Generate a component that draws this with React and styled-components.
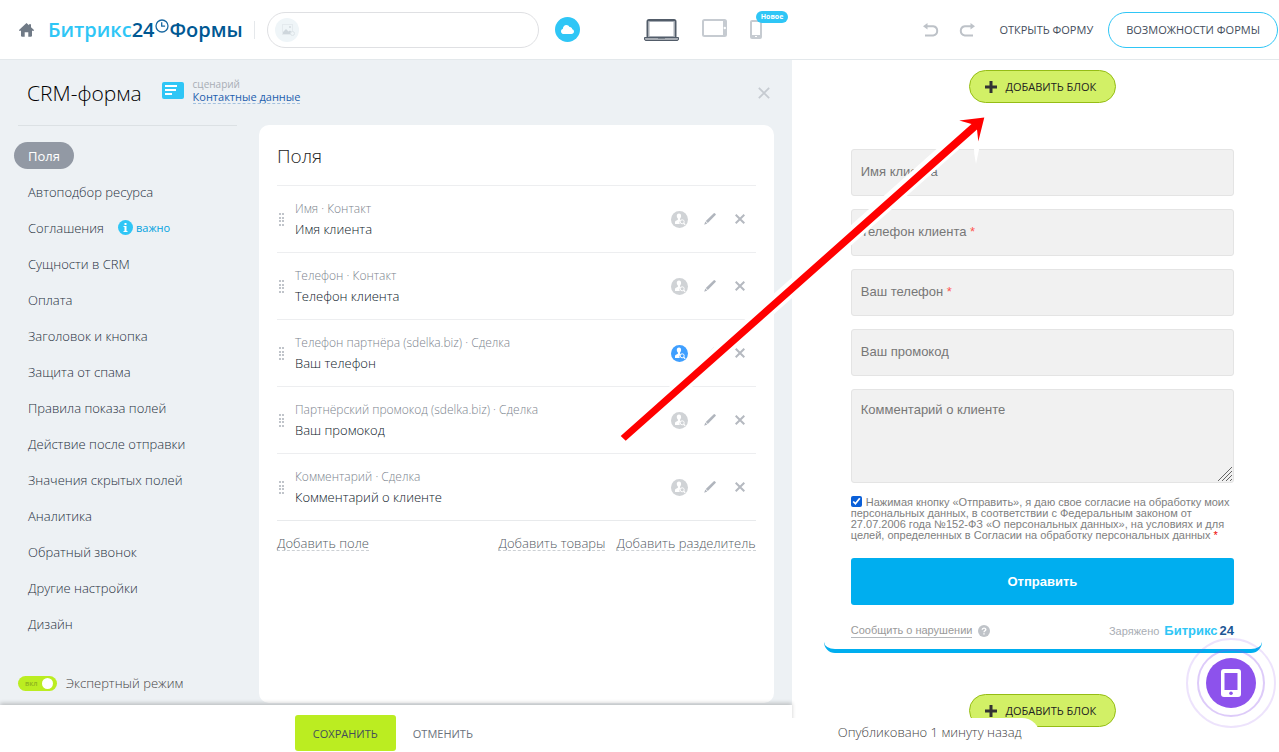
/* React */
import React, { useState } from 'react';

/* Styles */
import styled, { createGlobalStyle } from 'styled-components';

/* Data */
const menuItems = [
    { title: 'Поля' },
    { title: 'Автоподбор ресурса' },
    { title: 'Соглашения', important: true },
    { title: 'Сущности в CRM' },
    { title: 'Оплата' },
    { title: 'Заголовок и кнопка' },
    { title: 'Защита от спама' },
    { title: 'Правила показа полей' },
    { title: 'Действие после отправки' },
    { title: 'Значения скрытых полей' },
    { title: 'Аналитика' },
    { title: 'Обратный звонок' },
    { title: 'Другие настройки' },
    { title: 'Дизайн' },
];

const fields = [
    { source: 'Имя · Контакт', title: 'Имя клиента' },
    { source: 'Телефон · Контакт', title: 'Телефон клиента' },
    { source: 'Телефон партнёра (sdelka.biz) · Сделка', title: 'Ваш телефон', active: true },
    { source: 'Партнёрский промокод (sdelka.biz) · Сделка', title: 'Ваш промокод' },
    { source: 'Комментарий · Сделка', title: 'Комментарий о клиенте' },
];

const inputs = [
    { id: 'name', title: 'Имя клиента' },
    { id: 'client-phone', title: 'Телефон клиента', required: true },
    { id: 'phone', title: 'Ваш телефон', required: true },
    { id: 'promo', title: 'Ваш промокод' },
];

/* Styled Components */
const GlobalStyle = createGlobalStyle`
    *, *::before, *::after {
        box-sizing: border-box;
    }

    body {
        margin: 0;
        background: #fff;
        color: #525c69;
        font-family: "Open Sans", sans-serif;
        font-size: 13px;
    }

    button, input, textarea {
        font-family: inherit;
    }

    svg {
        display: block;
    }
`;

const Page = styled.div`
    position: relative;
    min-height: 100vh;
    display: flex;
    flex-direction: column;
`;

const Header = styled.header`
    height: 60px;
    display: flex;
    align-items: center;
    padding-left: 19px;
    border-bottom: 1px solid #e3e8eb;
`;

const IconButton = styled.button`
    display: flex;
    align-items: center;
    justify-content: center;
    padding: 0;
    border: 0;
    background: none;
    cursor: pointer;
`;

const Logo = styled.a`
    display: flex;
    align-items: center;
    margin-left: 14px;
    color: #005893;
    font-size: 20px;
    font-weight: 600;
    line-height: 28px;
    text-decoration: none;
    white-space: nowrap;

    svg {
        align-self: flex-start;
        margin: 3px 1px 0 0;
    }
`;

const LogoAccent = styled.span`
    color: #2fc6f6;
`;

const Separator = styled.span`
    width: 1px;
    height: 18px;
    margin: 0 12px 0 11px;
    background: #e5e8eb;
`;

const TitleBox = styled.div`
    flex: 0 1 272px;
    height: 36px;
    display: flex;
    align-items: center;
    gap: 8px;
    padding: 0 7px;
    border: 1px solid #dfe0e3;
    border-radius: 18px;
`;

const TitleInput = styled.input`
    flex: 1;
    min-width: 0;
    border: 0;
    outline: 0;
    background: none;
`;

const CloudButton = styled(IconButton)`
    width: 25px;
    height: 25px;
    flex: none;
    margin-left: 16px;
    border-radius: 50%;
    background: #2fc6f6;
`;

const Devices = styled.div`
    display: flex;
    align-items: flex-start;
    gap: 23px;
    margin-left: 64px;
`;

const PhoneButton = styled(IconButton)`
    position: relative;
`;

const NewBadge = styled.span`
    position: absolute;
    left: 6px;
    top: -8px;
    height: 12px;
    padding: 0 5px;
    border-radius: 6px;
    background: #2fc6f6;
    color: #fff;
    font-size: 7px;
    font-weight: 700;
    line-height: 12px;
`;

const HeaderActions = styled.div`
    display: flex;
    align-items: center;
    margin-left: auto;
    padding-right: 1px;
`;

const History = styled.div`
    display: flex;
    gap: 20px;
    margin-right: 24px;
`;

const OpenLink = styled.a`
    margin-right: 15px;
    color: #434d5b;
    font-size: 11px;
    font-weight: 500;
    text-decoration: none;
    white-space: nowrap;
`;

const OutlineButton = styled.button`
    height: 36px;
    padding: 0 17px;
    border: 1px solid #2fc6f6;
    border-radius: 18px;
    background: #fff;
    color: #434d5b;
    font-size: 11px;
    font-weight: 500;
    white-space: nowrap;
`;

const Workspace = styled.main`
    flex: 1;
    display: grid;
    grid-template-columns: minmax(0, 13fr) minmax(0, 8fr);
`;

const Editor = styled.section`
    display: flex;
    flex-direction: column;
    background: #edf1f4;
`;

const EditorHeader = styled.div`
    height: 65px;
    display: flex;
    align-items: center;
    padding: 0 22px 0 27px;
`;

const EditorTitle = styled.h1`
    margin: 0 20px 0 0;
    color: #000;
    font-size: 21px;
    font-weight: 300;
    line-height: 30px;
`;

const Scenario = styled.div`
    display: flex;
    flex-direction: column;
    margin: 0 auto 4px 9px;
    color: #a8adb4;
    font-size: 10px;
    line-height: 12px;
`;

const ScenarioLink = styled.a`
    border-bottom: 1px dashed #a3c1df;
    color: #1d5fae;
    font-size: 11px;
    line-height: 13px;
    text-decoration: none;
`;

const EditorBody = styled.div`
    flex: 1;
    display: flex;
    padding-right: 18px;
`;

const Sidebar = styled.aside`
    flex: 0 0 259px;
    padding: 0 22px 0 14px;
`;

const Menu = styled.nav`
    display: flex;
    flex-direction: column;
    align-items: flex-start;
    gap: 9px;
    margin-left: 4px;
    padding-top: 16px;
    border-top: 1px solid #dce1e4;
`;

const MenuRow = styled.div`
    display: flex;
    align-items: center;
    margin-left: -4px;
`;

const MenuItem = styled.a`
    height: 27px;
    padding: 0 14px;
    border-radius: 14px;
    background: ${props => props.$active ? '#9299a4' : 'none'};
    color: ${props => props.$active ? '#fff' : '#26303d'};
    font-size: 13px;
    font-weight: ${props => props.$active ? '400' : '300'};
    line-height: 28px;
    text-decoration: none;
    white-space: nowrap;
`;

const Important = styled.span`
    display: flex;
    align-items: center;
    gap: 3px;
    color: #00a2e0;
    font-size: 11px;
    line-height: 16px;
`;

const ExpertMode = styled.label`
    display: flex;
    align-items: center;
    gap: 9px;
    margin: 36px 0 0 4px;
    color: #444;
    font-size: 13px;
    font-weight: 300;
    line-height: 20px;
`;

const Switch = styled.span`
    position: relative;
    width: 39px;
    height: 15px;
    padding-left: 7px;
    border-radius: 8px;
    background: ${props => props.$on ? '#bbed21' : '#c6cdd3'};
    color: #8fb31f;
    font-size: 7px;
    font-weight: 600;
    line-height: 15px;

    &::after {
        content: '';
        position: absolute;
        top: 2px;
        left: ${props => props.$on ? '24px' : '4px'};
        width: 11px;
        height: 11px;
        border-radius: 50%;
        background: #fff;
    }
`;

const SwitchInput = styled.input`
    position: absolute;
    inset: 0;
    margin: 0;
    opacity: 0;
`;

const Card = styled.section`
    flex: 1;
    min-width: 0;
    margin-bottom: 2px;
    padding: 0 18px;
    border-radius: 10px;
    background: #fff;
`;

const CardTitle = styled.h2`
    margin: 0;
    padding: 17px 0 14px;
    color: #222;
    font-size: 19px;
    font-weight: 300;
    line-height: 29px;
`;

const FieldList = styled.ul`
    margin: 0;
    padding: 0;
    border-bottom: 1px solid #e8eaec;
    list-style: none;
`;

const FieldRow = styled.li`
    height: 67px;
    display: flex;
    align-items: center;
    padding: 0 6px 0 2px;
    border-top: 1px solid #edeef0;
`;

const FieldText = styled.div`
    flex: 1;
    padding-left: 11px;
`;

const FieldSource = styled.div`
    color: #7c848e;
    font-size: 12px;
    font-weight: 300;
    line-height: 20px;
`;

const FieldName = styled.div`
    color: #0c1828;
    font-size: 13px;
    font-weight: 300;
    line-height: 20px;
`;

const FieldActions = styled.div`
    display: flex;
    align-items: center;
    gap: 10px;

    button {
        width: 20px;
    }
`;

const CardLinks = styled.div`
    display: flex;
    gap: 11px;
    margin-top: 15px;
`;

const DashedLink = styled.a`
    margin-right: ${props => props.$push ? 'auto' : '0'};
    border-bottom: 1px dashed #ccd0d4;
    color: #535a63;
    font-size: 13px;
    font-weight: 300;
    line-height: 14px;
    text-decoration: none;
    white-space: nowrap;
`;

const EditorFooter = styled.footer`
    position: relative;
    height: 47px;
    display: flex;
    align-items: center;
    justify-content: center;
    padding-top: 9px;
    background: #fff;
    box-shadow: 0 -2px 4px rgba(0, 0, 0, 0.2);
`;

const FooterButton = styled.button`
    height: 36px;
    padding: ${props => props.$primary ? '0 18px' : '0 24px 0 17px'};
    border: 0;
    border-radius: 3px;
    background: ${props => props.$primary ? '#bbed21' : 'none'};
    color: ${props => props.$primary ? '#434d5b' : '#6b727c'};
    font-size: 11px;
    font-weight: 500;
`;

const Preview = styled.section`
    position: relative;
    display: flex;
    flex-direction: column;
    align-items: center;
    padding: 10px 17px 25px 32px;
`;

const AddBlock = styled.button`
    height: 33px;
    flex: none;
    display: flex;
    align-items: center;
    gap: 8px;
    padding: 0 19px 0 15px;
    border: 1px solid #95bd15;
    border-radius: 17px;
    background: #d2f066;
    color: #222;
    font-size: 11px;
    font-weight: 500;
`;

const Form = styled.form`
    align-self: stretch;
    display: flex;
    flex-direction: column;
    gap: 13px;
    margin: 46px 0 41px;
    padding: 0 28px 8px 27px;
    border-bottom: 4px solid #00aeef;
    border-radius: 0 0 11px 11px;
    color: #777;
    font-family: "Liberation Sans", Arial, sans-serif;
`;

const FormField = styled.div`
    position: relative;
    display: flex;
`;

const FormLabel = styled.label`
    position: absolute;
    left: 10px;
    top: ${props => props.$top ? '13px' : '15px'};
    font-size: 13px;
    line-height: 16px;
`;

const Required = styled.span`
    color: ${props => props.$strong ? '#e00' : '#ff5752'};
`;

const FormInput = styled.input`
    width: 100%;
    height: 47px;
    padding: 0 10px;
    border: 1px solid #e4e4e4;
    border-radius: 3px;
    background: #f1f1f1;
    font-size: 13px;
`;

const FormTextarea = styled.textarea`
    width: 100%;
    height: 94px;
    padding: 12px 10px;
    border: 1px solid #e4e4e4;
    border-radius: 3px;
    background: #f1f1f1;
    font-size: 13px;
    resize: none;
`;

const Grip = styled.svg`
    position: absolute;
    right: 2px;
    bottom: 2px;
`;

const Consent = styled.label`
    color: #808080;
    font-size: 11px;
    line-height: 11px;
`;

const ConsentBox = styled.input`
    width: 11px;
    height: 11px;
    margin: 0 4px 0 0;
    vertical-align: -1px;
    accent-color: #0a5fd8;
`;

const SubmitButton = styled.button`
    height: 47px;
    margin-top: 4px;
    border: 0;
    border-radius: 3px;
    background: #00aeef;
    color: #fff;
    font-size: 13px;
    font-weight: 700;
`;

const FormFooter = styled.div`
    display: flex;
    align-items: center;
    margin-top: 3px;
    color: #a8adb4;
    font-size: 11px;
    line-height: 20px;
`;

const ReportLink = styled.a`
    margin-right: 6px;
    border-bottom: 1px solid #b5b8bc;
    color: #9a9a9a;
    font-size: 11px;
    line-height: 13px;
    text-decoration: none;
`;

const Powered = styled.span`
    margin-left: auto;
`;

const PoweredLogo = styled(Logo)`
    gap: 2px;
    margin-left: 5px;
    color: #1d5795;
    font-size: 13px;
    font-weight: 700;
    line-height: 20px;
`;

const Published = styled.div`
    position: absolute;
    left: 0;
    bottom: 0;
    height: 34px;
    padding: 0 18px 0 46px;
    border-top-right-radius: 18px;
    background: #fff;
    color: #444;
    font-size: 13px;
    font-weight: 300;
    line-height: 29px;
`;

const Widget = styled.button`
    position: absolute;
    right: 23px;
    bottom: 44px;
    width: 50px;
    height: 50px;
    display: flex;
    align-items: center;
    justify-content: center;
    padding: 0;
    border: 0;
    border-radius: 50%;
    background: #8d52ec;

    &::before,
    &::after {
        content: '';
        position: absolute;
        border-radius: 50%;
    }

    &::before {
        inset: -9px;
        border: 2px solid rgba(141, 82, 236, 0.3);
    }

    &::after {
        inset: -20px;
        border: 2px solid rgba(141, 82, 236, 0.16);
    }
`;

const Pointer = styled.svg`
    position: absolute;
    left: 600px;
    top: 100px;
    pointer-events: none;
`;

/* Icons */
const HomeIcon = () => (
    <svg width="15" height="14" viewBox="0 0 15 14" fill="#707a86">
        <path d="M7.5 0 10 2.3V1.2h2v3L15 7v.8h-2V13l-.8.8H9.3V9.3H5.7v4.5H2.8L2 13V7.8H0V7z" />
    </svg>
);

const ClockIcon = () => (
    <svg width="14" height="14" viewBox="0 0 14 14" fill="none" stroke="#1767a0" strokeWidth="1.3">
        <circle cx="7" cy="7" r="6" />
        <path d="M6.7 3.2v4h3.4" />
    </svg>
);

const PictureIcon = () => (
    <svg width="24" height="24" viewBox="0 0 24 24">
        <circle cx="12" cy="12" r="12" fill="#eff5f8" />
        <rect x="7.5" y="6.5" width="10" height="10" fill="none" stroke="#e4eaee" />
        <path d="M8 16v-2l3-3 2.500 2.500 1.500-1 2 2V16z" fill="#ced6dc" />
        <circle cx="15" cy="9" r="1" fill="#d3dadf" />
        <circle cx="17.500" cy="15.500" r="2" fill="#eff5f8" stroke="#dde4e8" />
    </svg>
);

const CloudIcon = () => (
    <svg width="13" height="9" viewBox="0 0 13 9" fill="#fff">
        <path d="M3 9C1.200 9 0 7.900 0 6.400 0 5.200.7 4.300 1.800 4 1.800 1.700 3.300 0 5.300 0c1.500 0 2.700.8 3.200 2 1.500-.2 2.600.8 2.700 2.200 1.100.2 1.800 1.100 1.800 2.300C13 8 11.900 9 10.400 9z" />
    </svg>
);

const LaptopIcon = () => (
    <svg width="35" height="22" viewBox="0 0 35 22">
        <rect x="3.500" y="1" width="28" height="18" rx="1.500" fill="#fff" stroke="#525c69" strokeWidth="2" />
        <rect x="5" y="2.500" width="25" height="15" fill="none" stroke="#a5abb3" />
        <path d="M.5 18.500h34v1.500q0 1.500-1.500 1.500H2Q.5 21.500.5 20z" fill="#a8adb4" stroke="#525c69" />
        <path d="M14 18h7v1.500h-7z" fill="#525c69" />
    </svg>
);

const TabletIcon = () => (
    <svg width="25" height="18" viewBox="0 0 25 18">
        <rect x="1" y="1" width="23" height="16" rx="1.500" fill="#fff" stroke="#c6cbd1" strokeWidth="2" />
        <path d="M21 1h3v16h-3z" fill="#c6cbd1" />
        <circle cx="22.800" cy="9" r="1.200" fill="#fff" />
    </svg>
);

const PhoneIcon = () => (
    <svg width="12" height="20" viewBox="0 0 12 20">
        <rect x="1" y="2" width="10" height="17" rx="1" fill="#fff" stroke="#c6cbd1" strokeWidth="2" />
        <path d="M1 16h10v3H1z" fill="#c6cbd1" />
        <path d="M5 17h2v1H5z" fill="#fff" />
    </svg>
);

const UndoIcon = ({ redo }) => (
    <svg width="16" height="14" viewBox="0 0 16 14">
        <g transform={redo ? 'translate(16 0) scale(-1 1)' : undefined}>
            <path d="M3 3.200h7.200a4.700 4.700 0 0 1 0 9.300H2" fill="none" stroke="#bdc2c8" strokeWidth="2" />
            <path d="M4.500 0v6.400L0 3.200z" fill="#bdc2c8" />
        </g>
    </svg>
);

const ScenarioIcon = () => (
    <svg width="22" height="21" viewBox="0 0 22 21">
        <rect width="22" height="17" rx="2" fill="#2fc6f6" />
        <path d="M3 4h12M3 8h11M3 12h7" stroke="#fff" strokeWidth="2" />
    </svg>
);

const InfoIcon = () => (
    <svg width="15" height="15" viewBox="0 0 15 15">
        <circle cx="7.500" cy="7.500" r="7.500" fill="#2fc6f6" />
        <path d="M6.500 3h2v2h-2zM5.500 6h3v5h1v1h-4v-1h1V7h-1z" fill="#fff" />
    </svg>
);

const CrossIcon = ({ size = 10, color = '#b5b9c0', width = 2 }) => (
    <svg width={size} height={size} viewBox="0 0 10 10" stroke={color} strokeWidth={width}>
        <path d="M.7.7l8.600 8.600M9.300.7.7 9.300" />
    </svg>
);

const PencilIcon = () => (
    <svg width="12" height="12" viewBox="0 0 12 12" fill="#b0b5bd">
        <path d="M9.800.3q.6-.5 1.200.1l.6.600q.5.600 0 1.100L3.800 9.900 1.800 7.900zM1.300 8.400l2 2L.2 11.800z" />
    </svg>
);

const PersonIcon = ({ active }) => (
    <svg width="17" height="17" viewBox="0 0 17 17">
        <circle cx="8.500" cy="8.500" r="8.500" fill={active ? '#3f9fff' : '#d0d3d6'} />
        <path d="M8 2.500c1.500 0 2.200.9 2.100 2.400 0 1.200-.5 2-1 2.500v1.300l.9.500a3 3 0 0 0-1.200 3.800H4V11c0-.7.5-1.100 1.500-1.500l1.400-.8V7.400c-.6-.5-1.100-1.300-1.100-2.500C5.700 3.400 6.500 2.500 8 2.500z" fill="#fff" />
        <circle cx="11.200" cy="10.800" r="2" fill="none" stroke="#fff" />
        <path d="M12.600 12.200l1.600 1.500" stroke="#fff" strokeWidth="1.200" />
    </svg>
);

const DragIcon = () => (
    <svg width="5" height="13" viewBox="0 0 5 13" fill="#c0c4ca">
        {[0, 4, 7, 11].map(y => (
            <path key={y} d={`M0 ${y}h2v2H0zM3 ${y}h2v2H3z`} />
        ))}
    </svg>
);

const PlusIcon = () => (
    <svg width="12" height="12" viewBox="0 0 12 12" fill="#333">
        <path d="M4.500 0h3v4.500H12v3H7.500V12h-3V7.500H0v-3h4.500z" />
    </svg>
);

const HelpIcon = () => (
    <svg width="12" height="12" viewBox="0 0 12 12">
        <circle cx="6" cy="6" r="6" fill="#bfc3c8" />
        <path d="M4.200 4.800c0-2.200 3.600-2.200 3.600-.2C7.800 5.800 6 5.800 6 7.300M6 8.200v1.400" fill="none" stroke="#fff" strokeWidth="1.400" />
    </svg>
);

const MobileIcon = () => (
    <svg width="20" height="28" viewBox="0 0 20 28">
        <rect width="20" height="28" rx="3" fill="#fff" />
        <path d="M3.500 4h13v17h-13z" fill="#8d52ec" />
        <circle cx="10" cy="24.300" r="1.800" fill="#8d52ec" />
    </svg>
);

const App = () => {
    // Hooks for the selected menu item and expert mode
    const [selected, setSelected] = useState('Поля');
    const [expert, setExpert] = useState(true);

    return (
        <Page>
            <GlobalStyle />
            <Header>
                <IconButton aria-label="Главная"><HomeIcon /></IconButton>
                <Logo href="#">
                    <LogoAccent>Битрикс</LogoAccent>24
                    <ClockIcon />
                    Формы
                </Logo>
                <Separator />
                <TitleBox>
                    <PictureIcon />
                    <TitleInput aria-label="Название формы" />
                </TitleBox>
                <CloudButton aria-label="Облако"><CloudIcon /></CloudButton>
                <Devices>
                    <IconButton aria-label="Компьютер"><LaptopIcon /></IconButton>
                    <IconButton aria-label="Планшет"><TabletIcon /></IconButton>
                    <PhoneButton aria-label="Телефон">
                        <PhoneIcon />
                        <NewBadge>Новое</NewBadge>
                    </PhoneButton>
                </Devices>
                <HeaderActions>
                    <History>
                        <IconButton aria-label="Отменить действие"><UndoIcon /></IconButton>
                        <IconButton aria-label="Повторить действие"><UndoIcon redo /></IconButton>
                    </History>
                    <OpenLink href="#">ОТКРЫТЬ ФОРМУ</OpenLink>
                    <OutlineButton>ВОЗМОЖНОСТИ ФОРМЫ</OutlineButton>
                </HeaderActions>
            </Header>

            <Workspace>
                <Editor>
                    <EditorHeader>
                        <EditorTitle>CRM-форма</EditorTitle>
                        <ScenarioIcon />
                        <Scenario>
                            сценарий
                            <ScenarioLink href="#">Контактные данные</ScenarioLink>
                        </Scenario>
                        <IconButton aria-label="Закрыть">
                            <CrossIcon size={12} color="#c6cbd1" width={1.5} />
                        </IconButton>
                    </EditorHeader>
                    <EditorBody>
                        <Sidebar>
                            <Menu>
                                {menuItems.map(item => (
                                    <MenuRow key={item.title}>
                                        <MenuItem
                                            href="#"
                                            $active={item.title === selected}
                                            onClick={() => setSelected(item.title)}
                                        >
                                            {item.title}
                                        </MenuItem>
                                        {item.important && <Important><InfoIcon />важно</Important>}
                                    </MenuRow>
                                ))}
                            </Menu>
                            <ExpertMode>
                                <Switch $on={expert}>
                                    {expert && 'вкл'}
                                    <SwitchInput
                                        type="checkbox"
                                        checked={expert}
                                        onChange={() => setExpert(!expert)}
                                    />
                                </Switch>
                                Экспертный режим
                            </ExpertMode>
                        </Sidebar>
                        <Card>
                            <CardTitle>Поля</CardTitle>
                            <FieldList>
                                {fields.map(field => (
                                    <FieldRow key={field.title}>
                                        <DragIcon />
                                        <FieldText>
                                            <FieldSource>{field.source}</FieldSource>
                                            <FieldName>{field.title}</FieldName>
                                        </FieldText>
                                        <FieldActions>
                                            <IconButton aria-label="Автозаполнение"><PersonIcon active={field.active} /></IconButton>
                                            <IconButton aria-label="Изменить"><PencilIcon /></IconButton>
                                            <IconButton aria-label="Удалить"><CrossIcon /></IconButton>
                                        </FieldActions>
                                    </FieldRow>
                                ))}
                            </FieldList>
                            <CardLinks>
                                <DashedLink href="#" $push>Добавить поле</DashedLink>
                                <DashedLink href="#">Добавить товары</DashedLink>
                                <DashedLink href="#">Добавить разделитель</DashedLink>
                            </CardLinks>
                        </Card>
                    </EditorBody>
                    <EditorFooter>
                        <FooterButton $primary>СОХРАНИТЬ</FooterButton>
                        <FooterButton>ОТМЕНИТЬ</FooterButton>
                    </EditorFooter>
                </Editor>

                <Preview>
                    <AddBlock><PlusIcon />ДОБАВИТЬ БЛОК</AddBlock>
                    <Form onSubmit={event => event.preventDefault()}>
                        {inputs.map(input => (
                            <FormField key={input.id}>
                                <FormInput id={input.id} />
                                <FormLabel htmlFor={input.id}>
                                    {input.title}{input.required && <Required> *</Required>}
                                </FormLabel>
                            </FormField>
                        ))}
                        <FormField>
                            <FormTextarea id="comment" />
                            <FormLabel htmlFor="comment" $top>Комментарий о клиенте</FormLabel>
                            <Grip width="14" height="14" viewBox="0 0 14 14" stroke="#666">
                                <path d="M0 14 14 0M4 14 14 4M8 14l6-6M12 14l2-2" />
                            </Grip>
                        </FormField>
                        <Consent>
                            <ConsentBox type="checkbox" defaultChecked />
                            Нажимая кнопку «Отправить», я даю свое согласие на обработку моих
                            персональных данных, в соответствии с Федеральным законом от
                            27.07.2006 года №152-ФЗ «О персональных данных», на условиях и для
                            целей, определенных в Согласии на обработку персональных данных
                            <Required $strong> *</Required>
                        </Consent>
                        <SubmitButton>Отправить</SubmitButton>
                        <FormFooter>
                            <ReportLink href="#">Сообщить о нарушении</ReportLink>
                            <HelpIcon />
                            <Powered>Заряжено</Powered>
                            <PoweredLogo href="#"><LogoAccent>Битрикс</LogoAccent>24</PoweredLogo>
                        </FormFooter>
                    </Form>
                    <AddBlock><PlusIcon />ДОБАВИТЬ БЛОК</AddBlock>
                    <Published>Опубликовано 1 минуту назад</Published>
                    <Widget aria-label="Мобильное приложение"><MobileIcon /></Widget>
                </Preview>
            </Workspace>

            <Pointer width="400" height="350" viewBox="0 0 400 350" aria-hidden="true">
                <path d="M60 295 368 21 381 40 376 64Q373 52 374 36L83 295z" fill="#fff" />
                <path d="M384.300 17.500 359.300 20.500 371.500 24 20.700 336 25.700 340.700 377 29.500 378.300 41.500z" fill="#f00" />
            </Pointer>
        </Page>
    );
};

export default App;
